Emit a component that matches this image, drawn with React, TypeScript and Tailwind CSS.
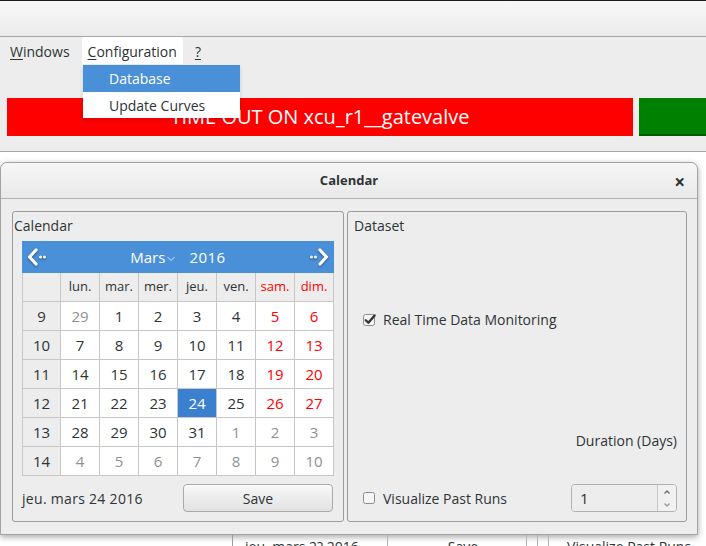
import React from 'react';

type Day = { n: number; kind?: 'other' | 'weekend' | 'selected' };

const weeks: { wk: number; days: Day[] }[] = [
  { wk: 9, days: [{ n: 29, kind: 'other' }, { n: 1 }, { n: 2 }, { n: 3 }, { n: 4 }, { n: 5, kind: 'weekend' }, { n: 6, kind: 'weekend' }] },
  { wk: 10, days: [{ n: 7 }, { n: 8 }, { n: 9 }, { n: 10 }, { n: 11 }, { n: 12, kind: 'weekend' }, { n: 13, kind: 'weekend' }] },
  { wk: 11, days: [{ n: 14 }, { n: 15 }, { n: 16 }, { n: 17 }, { n: 18 }, { n: 19, kind: 'weekend' }, { n: 20, kind: 'weekend' }] },
  { wk: 12, days: [{ n: 21 }, { n: 22 }, { n: 23 }, { n: 24, kind: 'selected' }, { n: 25 }, { n: 26, kind: 'weekend' }, { n: 27, kind: 'weekend' }] },
  { wk: 13, days: [{ n: 28 }, { n: 29 }, { n: 30 }, { n: 31 }, { n: 1, kind: 'other' }, { n: 2, kind: 'other' }, { n: 3, kind: 'other' }] },
  { wk: 14, days: [4, 5, 6, 7, 8, 9, 10].map(n => ({ n, kind: 'other' as const })) },
];

const dayNames = ['lun.', 'mar.', 'mer.', 'jeu.', 'ven.', 'sam.', 'dim.'];

const Arrow = ({ dir }: { dir: 'left' | 'right' }) => (
  <svg width="22" height="20" viewBox="0 0 22 20" className="drop-shadow-[0_1px_1px_rgba(0,0,0,0.45)]">
    <g transform={dir === 'right' ? 'translate(22,0) scale(-1,1)' : undefined}>
      <path d="M10 3 L3.5 10 L10 17" fill="none" stroke="#ffffff" strokeWidth="3.2" strokeLinecap="round" strokeLinejoin="round" />
      <circle cx="14.5" cy="10" r="1.6" fill="#f2f2f2" />
      <circle cx="18.5" cy="10" r="1.6" fill="#f2f2f2" />
    </g>
  </svg>
);

const CheckBox = ({ checked }: { checked?: boolean }) => (
  <svg width="14" height="14" viewBox="0 0 14 14">
    <rect x="0.5" y="1.5" width="11" height="11" rx="2" fill="#f6f6f6" stroke="#8d8d8d" />
    {checked && <path d="M2.8 7.2 L5.4 9.8 L11.6 2.4" fill="none" stroke="#2e3436" strokeWidth="2.3" strokeLinecap="round" strokeLinejoin="round" />}
  </svg>
);

export default function App() {
  return (
    <div className="relative w-[706px] h-[546px] overflow-hidden bg-white font-['Open_Sans',sans-serif] text-[#2e3436]">
      {/* main window */}
      <div className="h-px bg-[#1a1a1a]" />
      <div className="h-[36px] bg-gradient-to-b from-[#f7f7f7] to-[#ebebeb] border-b border-[#a6a6a6]" />
      <div className="bg-[#ededed]">
        <div className="flex items-stretch h-[27px] text-[14px] pl-[4px]">
          <div className="px-[6px] pt-px flex items-center"><span><span className="underline underline-offset-2">W</span>indows</span></div>
          <div className="ml-[6px] px-[6px] pt-px flex items-center bg-white rounded-t-[3px]"><span><span className="underline underline-offset-2">C</span>onfiguration</span></div>
          <div className="px-[12px] pt-px flex items-center"><span className="underline underline-offset-2">?</span></div>
        </div>
        <div className="flex pt-[34px] pl-[7px] pb-[15px] border-b border-[#a6a6a6]">
          <div className="w-[626px] h-[38px] bg-[#ff0000] text-white text-[20px] flex items-center justify-center">TIME OUT ON xcu_r1__gatevalve</div>
          <div className="ml-[6px] flex-1 h-[38px] bg-[#008000] border-b-2 border-[#005a00]" />
        </div>
      </div>

      {/* dropdown */}
      <div className="absolute left-[83px] top-[65px] w-[157px] bg-white text-[14px] shadow-[0_2px_4px_rgba(0,0,0,0.15)]">
        <div className="h-[27px] bg-[#4a90d9] text-white pl-[26px] flex items-center">Database</div>
        <div className="h-[26px] pl-[26px] flex items-center">Update Curves</div>
      </div>

      {/* dialog */}
      <div className="mt-[10px] w-[698px] h-[373px] flex flex-col bg-[#ededed] border border-[#a3a3a3] rounded-t-[7px] shadow-[0_2px_6px_rgba(0,0,0,0.35)]">
        <div className="h-[36px] shrink-0 rounded-t-[7px] bg-gradient-to-b from-[#f6f6f6] to-[#e9e9e9] border-b border-[#b3b3b3] flex items-center relative">
          <div className="flex-1 text-center text-[13px] font-bold">Calendar</div>
          <div className="absolute right-[12px] top-[5px] text-[19px] font-bold text-[#2e3436]">×</div>
        </div>
        <div className="flex gap-[3px] pl-[11px] pr-[10px] pt-[12px]">
          {/* calendar frame */}
          <div className="w-[332px] h-[311px] border border-[#9c9c9c] rounded-[3px] px-[9px] pt-[4px]">
            <div className="text-[14px] -ml-[8px] h-[25px] leading-[20px]">Calendar</div>
            <div className="w-[312px]">
              <div className="h-[32px] bg-[#4a90d9] flex items-center justify-between px-[4px] text-white">
                <Arrow dir="left" />
                <div className="flex items-center text-[15px]">
                  <span>Mars</span>
                  <svg width="10" height="8" viewBox="0 0 10 8" className="ml-[1px] mt-[3px]"><path d="M1.5 2 L5 5.5 L8.5 2" fill="none" stroke="#9fc3ec" strokeWidth="1.2" /></svg>
                  <span className="ml-[13px] tracking-[0.5px]">2016</span>
                </div>
                <Arrow dir="right" />
              </div>
              <div className="grid grid-cols-[37px_repeat(7,38px)] auto-rows-[28px] gap-px bg-[#c7c7c7] p-px pt-0">
                <div className="bg-[#ededed]" />
                {dayNames.map((d, i) => (
                  <div key={d} className={`bg-[#ededed] flex items-center justify-center text-[13px] ${i >= 5 ? 'text-[#ff0000]' : 'text-[#2e3436]'}`}>{d}</div>
                ))}
                {weeks.map(w => (
                  <React.Fragment key={w.wk}>
                    <div className="bg-[#ededed] flex items-center justify-center text-[15px]">{w.wk}</div>
                    {w.days.map((d, i) => (
                      <div
                        key={i}
                        className={`flex items-center justify-center text-[15px] ${
                          d.kind === 'selected'
                            ? 'bg-[#3b7fcf] text-white'
                            : d.kind === 'other'
                            ? 'bg-white text-[#8e9192]'
                            : d.kind === 'weekend'
                            ? 'bg-white text-[#ff0000]'
                            : 'bg-white text-[#2e3436]'
                        }`}
                      >
                        {d.n}
                      </div>
                    ))}
                  </React.Fragment>
                ))}
              </div>
              <div className="flex items-center justify-between mt-[8px]">
                <span className="text-[14px] tracking-[0.3px]">jeu. mars 24 2016</span>
                <button className="mr-px w-[150px] h-[28px] rounded-[4px] border border-[#a9a9a9] bg-gradient-to-b from-[#f8f8f8] to-[#e2e2e2] text-[14px] shadow-[inset_0_1px_0_#ffffff]">Save</button>
              </div>
            </div>
          </div>

          {/* dataset frame */}
          <div className="w-[342px] h-[311px] border border-[#9c9c9c] rounded-[3px] flex flex-col px-[15px] pt-[4px]">
            <div className="text-[14px] -ml-[9px] h-[20px] leading-[20px]">Dataset</div>
            <div className="flex items-center gap-[6px] mt-[73px] text-[14px]">
              <CheckBox checked />
              <span>Real Time Data Monitoring</span>
            </div>
            <div className="text-right text-[14px] mt-[100px] -mr-[6px]">Duration (Days)</div>
            <div className="flex items-center mt-[33px] -mr-[6px]">
              <CheckBox />
              <span className="ml-[6px] text-[14px]">Visualize Past Runs</span>
              <div className="ml-auto flex h-[28px] w-[106px] rounded-[4px] border border-[#b0b0b0] bg-[#e9e9e9] overflow-hidden">
                <div className="flex-1 flex items-center pl-[8px] text-[15px] bg-[#ededed]">1</div>
                <div className="w-[19px] border-l border-[#c8c8c8] flex flex-col bg-[#f1f1f1]">
                  <div className="flex-1 flex items-center justify-center">
                    <svg width="8" height="6" viewBox="0 0 8 6"><path d="M1.5 4.5 L4 2 L6.5 4.5" fill="none" stroke="#6b6b6b" strokeWidth="1.3" /></svg>
                  </div>
                  <div className="flex-1 flex items-center justify-center">
                    <svg width="8" height="6" viewBox="0 0 8 6"><path d="M1.5 1.5 L4 4 L6.5 1.5" fill="none" stroke="#9a9a9a" strokeWidth="1.3" /></svg>
                  </div>
                </div>
              </div>
            </div>
          </div>
        </div>
      </div>

      {/* window peeking under dialog */}
      <div className="h-[11px] overflow-hidden flex items-start text-[14px] text-[#2e3436]">
        <div className="ml-[232px] w-px h-full bg-[#9c9c9c]" />
        <span className="ml-[12px] mt-[1px]">jeu. mars 2? 2016</span>
        <div className="ml-[28px] w-px h-full bg-[#b3b3b3]" />
        <span className="ml-[60px] mt-[1px]">Save</span>
        <div className="ml-[48px] w-px h-full bg-[#b3b3b3]" />
        <div className="ml-[10px] w-px h-full bg-[#b3b3b3]" />
        <div className="ml-[10px] w-px h-full bg-[#b3b3b3]" />
        <span className="ml-[18px] mt-[1px] whitespace-nowrap">Visualize Past Runs</span>
      </div>
    </div>
  );
}
